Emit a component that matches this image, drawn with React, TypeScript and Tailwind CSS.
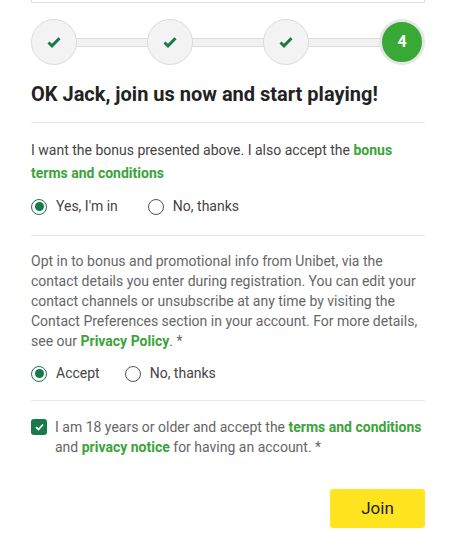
import React from "react";

const Check = () => (
  <svg width="14" height="12" viewBox="0 0 14 12">
    <path d="M1.5 6.5 L5 9.8 L12.5 2.2" fill="none" stroke="#18794a" strokeWidth="3" strokeLinecap="butt" strokeLinejoin="miter" />
  </svg>
);

const Done = () => (
  <div className="w-[46px] h-[46px] rounded-full border border-[#dcdcdc] bg-[#f3f3f3] flex items-center justify-center shrink-0 z-10">
    <Check />
  </div>
);

const Line = () => (
  <div className="flex-1 h-[9px] -mx-[2px] bg-[#f1f1f1] border-y border-[#dcdcdc]" />
);

const Radio = ({ on, label }: { on: boolean; label: string }) => (
  <label className="flex items-center gap-[9px]">
    <span
      className={
        on
          ? "w-[16px] h-[16px] rounded-full border-[1.5px] border-[#18794a] flex items-center justify-center"
          : "w-[16px] h-[16px] rounded-full border-[1.5px] border-[#555] flex items-center justify-center"
      }
    >
      {on && <span className="w-[9px] h-[9px] rounded-full bg-[#18794a]" />}
    </span>
    <span className="text-[14px] text-[#444]">{label}</span>
  </label>
);

export default function App() {
  return (
    <div className="w-[456px] h-[559px] bg-white px-[31px]" style={{ fontFamily: "Roboto, 'Liberation Sans', sans-serif" }}>
      <div className="h-[3px] border-x border-b border-[#dedede]" />
      <div className="flex items-center mt-[16px]">
        <Done />
        <Line />
        <Done />
        <Line />
        <Done />
        <Line />
        <div className="w-[46px] h-[46px] rounded-full border-[3px] border-[#e6e6e6] bg-[#38a935] flex items-center justify-center shrink-0 z-10">
          <span className="text-white font-bold text-[16px]">4</span>
        </div>
      </div>
      <h1 className="mt-[16px] text-[20px] font-bold text-[#222] leading-[26px]">OK Jack, join us now and start playing!</h1>
      <div className="mt-[15px] border-t border-[#e6e6e6]" />
      <p className="mt-[16px] text-[14px] leading-[23px] text-[#444]">
        I want the bonus presented above. I also accept the{" "}
        <span className="font-bold text-[#3aa43a]">bonus terms and conditions</span>
      </p>
      <div className="flex items-center gap-[30px] mt-[11px]">
        <Radio on label="Yes, I'm in" />
        <Radio on={false} label="No, thanks" />
      </div>
      <div className="mt-[18px] border-t border-[#e6e6e6]" />
      <p className="mt-[15px] text-[14px] leading-[20px] text-[#666]">
        Opt in to bonus and promotional info from Unibet, via the contact details you enter during registration. You can edit your contact channels or unsubscribe at any time by visiting the Contact Preferences section in your account. For more details, see our{" "}
        <span className="font-bold text-[#3aa43a]">Privacy Policy</span>. *
      </p>
      <div className="flex items-center gap-[25px] mt-[12px]">
        <Radio on label="Accept" />
        <Radio on={false} label="No, thanks" />
      </div>
      <div className="mt-[16px] border-t border-[#e6e6e6]" />
      <div className="flex gap-[8px] mt-[16px]">
        <span className="w-[16px] h-[16px] mt-[2px] rounded-[3px] bg-[#18794a] flex items-center justify-center shrink-0">
          <svg width="9" height="8" viewBox="0 0 9 8">
            <path d="M1 4.2 L3.5 6.5 L8 1.5" fill="none" stroke="white" strokeWidth="1.8" />
          </svg>
        </span>
        <p className="text-[14px] leading-[20px] text-[#666]">
          I am 18 years or older and accept the{" "}
          <span className="font-bold text-[#3aa43a]">terms and conditions</span> and{" "}
          <span className="font-bold text-[#3aa43a]">privacy notice</span> for having an account. *
        </p>
      </div>
      <div className="flex justify-end mt-[32px]">
        <button className="w-[95px] h-[39px] rounded-[3px] bg-[#ffe41f] text-[17px] text-[#222]">Join</button>
      </div>
    </div>
  );
}
